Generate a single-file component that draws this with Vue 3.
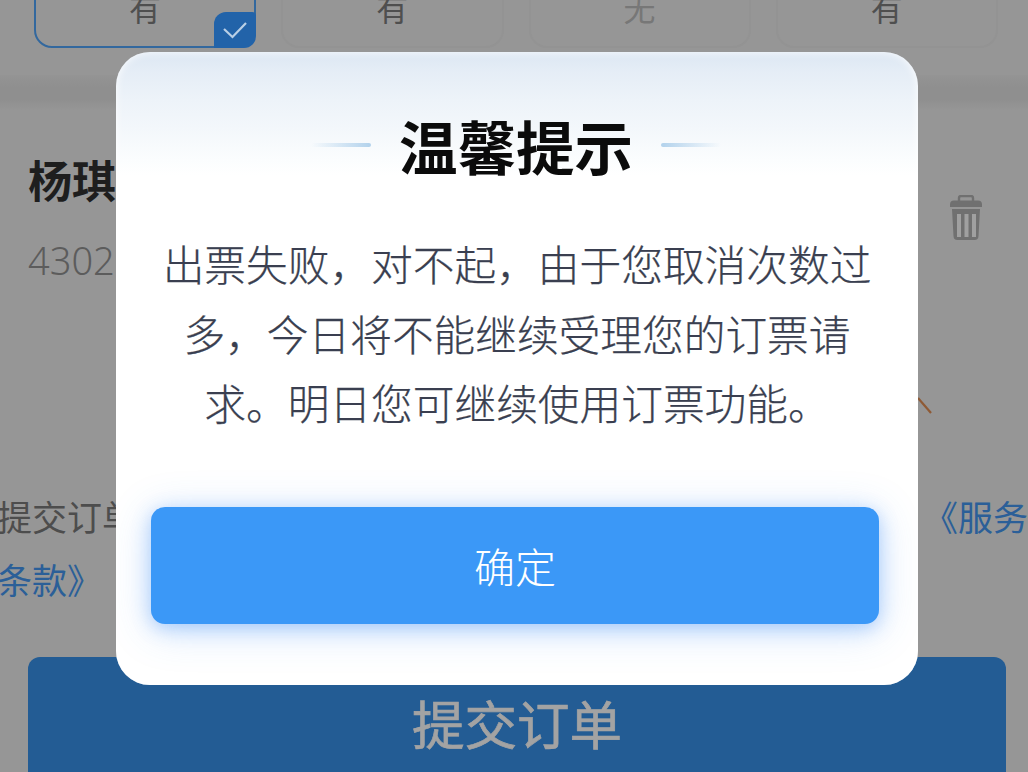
<script setup>
const seats = [
  { label: '有', selected: true },
  { label: '有' },
  { label: '无', off: true },
  { label: '有' },
]
</script>

<template>
  <div class="page">
    <div class="seats">
      <div
        v-for="(s, i) in seats"
        :key="i"
        class="seat"
        :class="{ selected: s.selected, off: s.off }"
      >
        {{ s.label }}
        <span v-if="s.selected" class="tick">
          <svg width="26" height="20" viewBox="0 0 26 20" fill="none">
            <path d="M2 9l8.5 8L24 3" stroke="#b9cfe6" stroke-width="2.2" />
          </svg>
        </span>
      </div>
    </div>
    <div class="band"></div>
    <div class="card">
      <div>
        <div class="name">杨琪</div>
        <div class="idno">430281199901010000</div>
      </div>
      <svg class="trash" width="34" height="46" viewBox="0 0 34 46">
        <path d="M10 6V3a2 2 0 0 1 2-2h10a2 2 0 0 1 2 2v3" fill="none" stroke="#707070" stroke-width="2.4" />
        <path d="M5 5.500h24a4 4 0 0 1 4 4v2.500H1V9.500a4 4 0 0 1 4-4z" fill="#707070" />
        <path d="M3 14h28l-1.500 27a4 4 0 0 1-4 4h-17a4 4 0 0 1-4-4z" fill="#707070" />
        <path d="M10 19v23M17.500 19v23M25 19v23" stroke="#a0a0a0" stroke-width="4" />
      </svg>
      <svg class="mark" width="16" height="18" viewBox="0 0 16 18" fill="none">
        <path d="M1 1l13 15" stroke="#8f5a35" stroke-width="2.200" />
      </svg>
    </div>
    <div class="terms">
      <div class="terms-line">
        <span class="terms-text">提交订单即表示您已阅读并同意</span>
        <a class="terms-link">《服务</a>
      </div>
      <div class="terms-line"><a class="terms-link">条款》</a></div>
    </div>
    <div class="submit">提交订单</div>

    <div class="overlay">
      <div class="modal">
        <div class="title-row">
          <span class="rule left"></span>
          <h2 class="title">温馨提示</h2>
          <span class="rule right"></span>
        </div>
        <p class="message">出票失败，对不起，由于您取消次数过多，今日将不能继续受理您的订票请求。明日您可继续使用订票功能。</p>
        <button class="confirm">确定</button>
      </div>
    </div>
  </div>
</template>

<style>
html,
body {
  margin: 0;
  background: #969696;
}
</style>

<style scoped>
.page {
  position: relative;
  width: 1028px;
  height: 772px;
  overflow: hidden;
  background: #969696;
  font-family: "Noto Sans CJK SC", "Noto Sans", sans-serif;
  text-spacing-trim: space-all;
}
.seats {
  display: grid;
  grid-template-columns: repeat(4, 1fr);
  gap: 25px;
  margin: -30px 30px 0 34px;
}
.seat {
  position: relative;
  box-sizing: border-box;
  height: 78px;
  padding-bottom: 5px;
  display: flex;
  align-items: center;
  justify-content: center;
  border: 2px solid #939393;
  border-radius: 18px;
  color: #4f4f4f;
  font-size: 32px;
  line-height: 1;
}
.seat.selected {
  border-color: #33689e;
}
.seat.off {
  color: #777;
}
.tick {
  position: absolute;
  right: -2px;
  bottom: -2px;
  width: 42px;
  height: 36px;
  display: flex;
  align-items: center;
  justify-content: center;
  background: #2263a9;
  border-radius: 12px 4px 12px 0;
}
.band {
  height: 35px;
  margin-top: 27px;
  background: linear-gradient(180deg, #949494, #8f8f8f 35%, #8f8f8f 70%, #969696);
}
.card {
  position: relative;
  height: 355px;
  box-sizing: border-box;
  padding: 43px 45px 0 28px;
  display: flex;
  justify-content: space-between;
  white-space: nowrap;
}
.name {
  font-size: 44px;
  font-weight: 700;
  line-height: 52px;
  color: #1e1e1e;
}
.idno {
  margin-top: 31px;
  font-size: 38px;
  line-height: 48px;
  color: #5c5c5c;
  font-family: "Noto Sans", "Noto Sans CJK SC", sans-serif;
  font-weight: 300;
}
.trash {
  margin-top: 42px;
}
.mark {
  position: absolute;
  right: 95px;
  top: 287px;
}
.terms {
  padding-top: 19px;
  font-size: 35px;
  line-height: 63px;
  white-space: nowrap;
}
.terms-line {
  display: flex;
  justify-content: space-between;
  margin: 0 0 0 -3px;
}
.terms-text {
  color: #4d4d4d;
}
.terms-link {
  color: #2b5f98;
}
.submit {
  margin: 47px 22px 0 28px;
  height: 130px;
  padding-top: 34px;
  box-sizing: border-box;
  background: #235c94;
  border-radius: 12px;
  color: #a3a3a3;
  font-size: 52.500px;
  line-height: 62px;
  text-align: center;
  -webkit-text-stroke: 0.7px #a3a3a3;
}
.overlay {
  position: absolute;
  inset: 0;
  padding: 52px 0 0 116px;
}
.modal {
  box-sizing: border-box;
  width: 802px;
  height: 633px;
  padding-top: 55px;
  border-radius: 34px;
  overflow: hidden;
  background: linear-gradient(180deg, #dce7f3 0%, #e5edf6 3%, #edf3f9 7.600%, #f3f7fb 12%, #fbfdfe 17%, #ffffff 19.500%);
  box-shadow: inset 0 0 8px rgba(255, 255, 255, 0.95);
  display: flex;
  flex-direction: column;
  align-items: center;
}
.title-row {
  display: flex;
  align-items: center;
  justify-content: center;
  gap: 28px;
  margin-right: 2px;
}
.title {
  margin: 0;
  font-size: 58.500px;
  font-weight: 700;
  line-height: 76px;
  color: #0b0b0b;
}
.rule {
  width: 60px;
  height: 4px;
  border-radius: 2px;
}
.rule.left {
  background: linear-gradient(90deg, rgba(178, 210, 236, 0), #b2d2ec);
}
.rule.right {
  background: linear-gradient(90deg, #b2d2ec, rgba(178, 210, 236, 0));
}
.message {
  width: 720px;
  margin: 46px 0 0;
  font-size: 41.700px;
  font-weight: 300;
  line-height: 69.500px;
  text-align: center;
  color: #3a3f50;
  -webkit-text-stroke: 0.25px #3a3f50;
}
.confirm {
  width: 728px;
  height: 117px;
  margin: 69px 4px 0 0;
  border: 0;
  border-radius: 14px;
  background: #3b98f7;
  box-shadow: 0 4px 18px rgba(60, 140, 245, 0.35), 0 6px 40px rgba(60, 140, 245, 0.25);
  color: #fff;
  font: inherit;
  font-size: 41px;
  font-weight: 300;
  line-height: 1;
}
</style>
